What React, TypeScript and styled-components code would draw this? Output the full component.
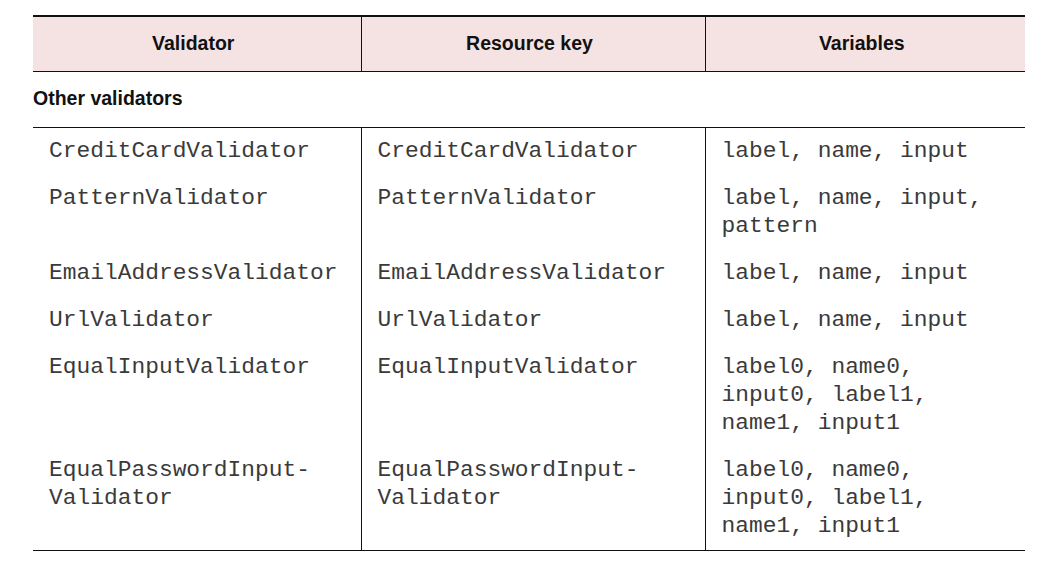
import React from "react";
import styled, { createGlobalStyle } from "styled-components";

const Global = createGlobalStyle`
  html, body { margin: 0; padding: 0; background: #ffffff; }
  body { width: 1037px; height: 564px; overflow: hidden; }
`;

const Page = styled.div`
  padding: 15px 0 0 33px;
`;

const Table = styled.table`
  width: 992px;
  table-layout: fixed;
  border-collapse: collapse;
  border-spacing: 0;
`;

const HeadRow = styled.tr`
  background: #f5e3e3;
  border-top: 2px solid #111;
  border-bottom: 1px solid #111;
`;

const HeadCell = styled.th`
  height: 55px;
  padding: 0 7px 1px 0;
  box-sizing: border-box;
  font-family: "Liberation Sans", Arial, sans-serif;
  font-weight: 700;
  font-size: 19.5px;
  color: #111;
  text-align: center;
  vertical-align: middle;
  & + & { border-left: 1px solid #111; }
`;

const SectionRow = styled.tr`
  border-bottom: 1px solid #111;
`;

const SectionCell = styled.td`
  height: 56px;
  padding: 0 0 2px 0;
  box-sizing: border-box;
  font-family: "Liberation Sans", Arial, sans-serif;
  font-weight: 700;
  font-size: 19.5px;
  color: #111;
  vertical-align: middle;
`;

const BodyRow = styled.tr<{ $last?: boolean }>`
  border-bottom: ${(p) => (p.$last ? "1px solid #111" : "none")};
`;

const Cell = styled.td`
  padding: 9px 8px 10px 16px;
  font-family: "Liberation Mono", "Courier New", monospace;
  font-size: 22.9px;
  line-height: 28px;
  color: #3a3a3a;
  vertical-align: top;
  white-space: pre;
  & + & { border-left: 1px solid #111; padding-left: 16px; }
`;

const rows: string[][][] = [
  [["CreditCardValidator"], ["CreditCardValidator"], ["label, name, input"]],
  [["PatternValidator"], ["PatternValidator"], ["label, name, input,", "pattern"]],
  [["EmailAddressValidator"], ["EmailAddressValidator"], ["label, name, input"]],
  [["UrlValidator"], ["UrlValidator"], ["label, name, input"]],
  [["EqualInputValidator"], ["EqualInputValidator"], ["label0, name0,", "input0, label1,", "name1, input1"]],
  [
    ["EqualPasswordInput-", "Validator"],
    ["EqualPasswordInput-", "Validator"],
    ["label0, name0,", "input0, label1,", "name1, input1"],
  ],
];

export default function App() {
  return (
    <Page>
      <Global />
      <Table>
        <colgroup>
          <col style={{ width: 328 }} />
          <col style={{ width: 344 }} />
          <col style={{ width: 320 }} />
        </colgroup>
        <thead>
          <HeadRow>
            <HeadCell>Validator</HeadCell>
            <HeadCell>Resource key</HeadCell>
            <HeadCell>Variables</HeadCell>
          </HeadRow>
        </thead>
        <tbody>
          <SectionRow>
            <SectionCell colSpan={3}>Other validators</SectionCell>
          </SectionRow>
          {rows.map((r, i) => (
            <BodyRow key={i} $last={i === rows.length - 1}>
              {r.map((lines, j) => (
                <Cell key={j}>{lines.join("\n")}</Cell>
              ))}
            </BodyRow>
          ))}
        </tbody>
      </Table>
    </Page>
  );
}
